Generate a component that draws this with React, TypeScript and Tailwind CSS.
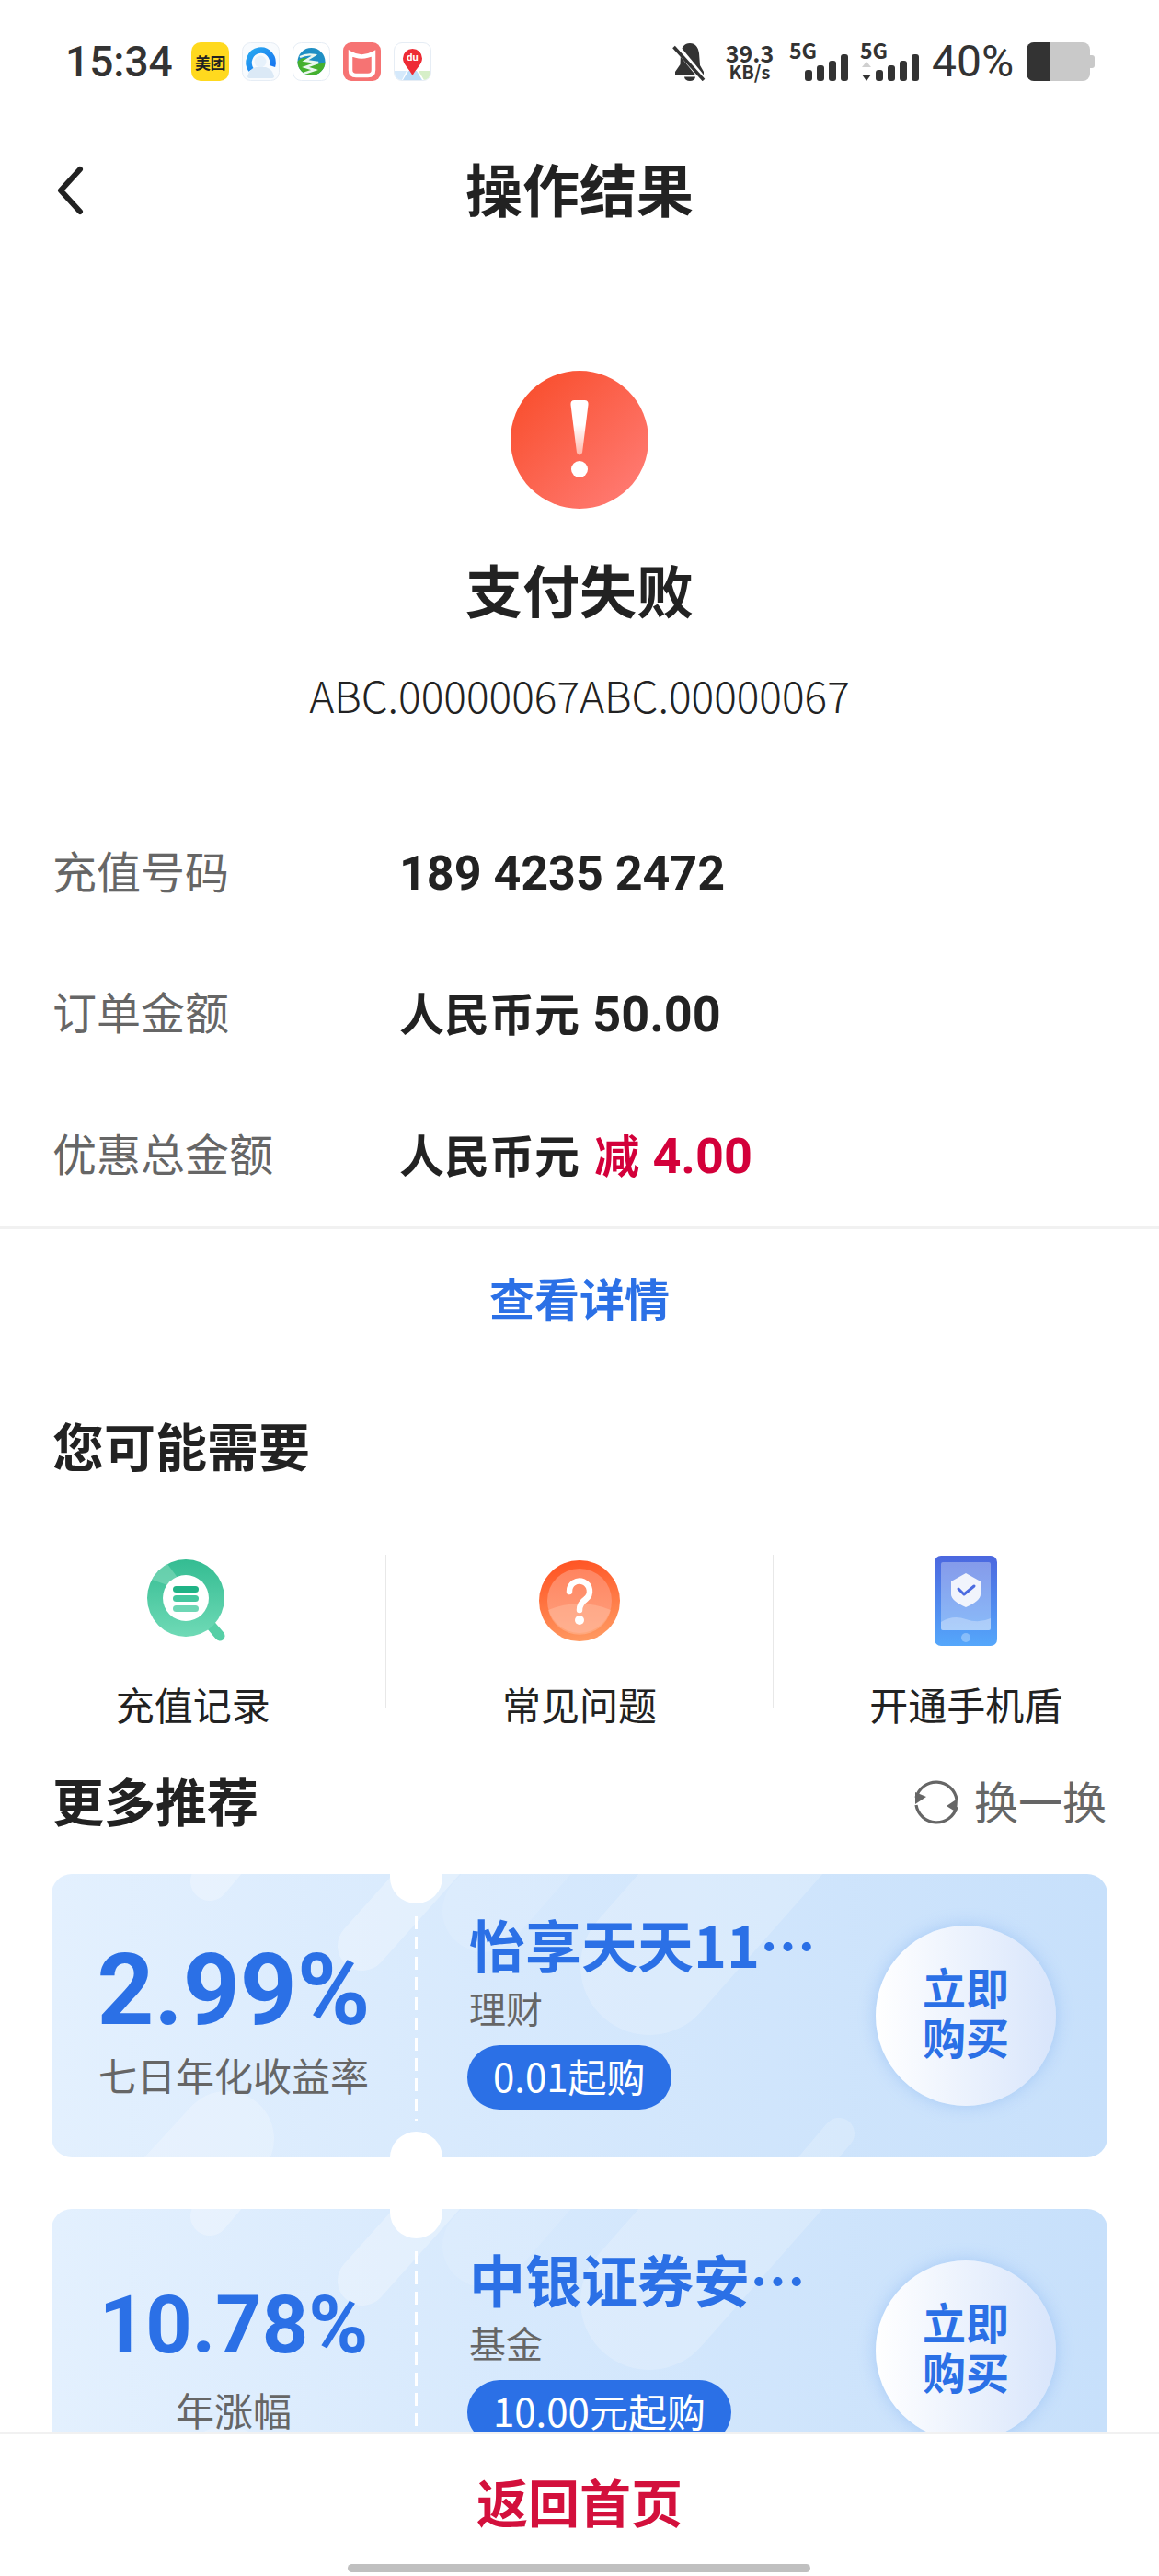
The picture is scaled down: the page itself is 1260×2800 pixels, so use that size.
import React from "react";

const SANS = "font-['Noto_Sans_CJK_SC','Noto_Sans',sans-serif]";
const NUM = "font-['Roboto','Noto_Sans_CJK_SC',sans-serif]";

function MeituanIcon() {
  return (
    <div className="flex h-[42px] w-[41px] items-center justify-center rounded-[10px] bg-[#ffd91e] text-[17px] font-bold leading-none tracking-[-0.5px] text-[#222]">
      美团
    </div>
  );
}

function BrowserIcon() {
  return (
    <svg width="41" height="42" viewBox="0 0 41 42">
      <defs>
        <linearGradient id="brg" x1="0" y1="0" x2="1" y2="1">
          <stop offset="0" stopColor="#28a8f0" />
          <stop offset="1" stopColor="#1874f0" />
        </linearGradient>
      </defs>
      <rect x="0.5" y="0.5" width="40" height="41" rx="9" fill="#f8fbfe" stroke="#e6edf5" />
      <path d="M10 30 A13 13.5 0 1 1 33 26" fill="none" stroke="url(#brg)" strokeWidth="6.5" />
      <circle cx="20" cy="21" r="6.5" fill="#e6f1fb" />
      <path d="M6 37 Q8 29 15 27 H26 Q33 29 35 37 Q35 39 32 39 H9 Q6 39 6 37Z" fill="#dbe9f6" />
    </svg>
  );
}

function LandscapeIcon() {
  return (
    <svg width="41" height="42" viewBox="0 0 41 42">
      <defs>
        <clipPath id="lc">
          <ellipse cx="20.5" cy="21" rx="15" ry="15" />
        </clipPath>
      </defs>
      <rect x="0.5" y="0.5" width="40" height="41" rx="9" fill="#fff" stroke="#e6edf5" />
      <g clipPath="url(#lc)">
        <rect x="0" y="0" width="41" height="42" fill="#1f8fc4" />
        <path d="M4 22 Q14 12 20 22 Q30 26 38 20 V40 H4Z" fill="#45b02e" />
        <path d="M8 16 Q16 12 24 14 L14 20 L28 22 L14 27 L24 30 L12 34" fill="none" stroke="#eaf7ee" strokeWidth="2.4" />
      </g>
    </svg>
  );
}

function CupIcon() {
  return (
    <svg width="41" height="42" viewBox="0 0 41 42">
      <rect width="41" height="42" rx="9" fill="#f67373" />
      <path d="M8 12 Q20 19 33 12 V30 Q33 36 27 36 H14 Q8 36 8 30 Z" fill="none" stroke="#fff" strokeWidth="4.5" />
    </svg>
  );
}

function MapIcon() {
  return (
    <div className="relative h-[42px] w-[41px] overflow-hidden rounded-[9px] border border-[#e6edf5] bg-white">
      <svg className="absolute inset-0" width="39" height="40" viewBox="0 0 39 40">
        <path d="M0 30 H13 L8 40 H0Z" fill="#d5e9fb" />
        <path d="M15 30 H24 L30 40 H9Z" fill="#bcdcf8" />
        <path d="M26 30 H39 V40 H32Z" fill="#d6efc8" />
        <path d="M19.5 6 a10.5 10.5 0 0 1 10.5 10.5 C30 23 23 28 19.5 35 C16 28 9 23 9 16.5 A10.5 10.5 0 0 1 19.5 6Z" fill="#ee2b35" />
      </svg>
      <span className="absolute left-0 right-0 top-[9px] text-center font-['Roboto',sans-serif] text-[11px] font-bold leading-[14px] text-white">du</span>
    </div>
  );
}

function BellOff() {
  return (
    <svg width="37" height="42" viewBox="0 0 37 42">
      <path d="M19 1 C13 1 10 5 9 12 L8.5 24 L3 32 L3 35 H34 V32 L30 25 L29 12 C28 5 25 1 19 1Z" fill="#333" />
      <path d="M13 37.5 H25 A6 4.5 0 0 1 13 37.5Z" fill="#333" />
      <path d="M2 2 L35 42" stroke="#fff" strokeWidth="7" />
      <path d="M1.5 5 L34 41" stroke="#333" strokeWidth="3.6" />
    </svg>
  );
}

function Signal({ arrows }: { arrows?: boolean }) {
  return (
    <svg width="63" height="29" viewBox="0 0 63 29">
      {arrows && (
        <>
          <path d="M1 14 L6 8 L11 14Z" fill="#d0d0d0" />
          <path d="M1 22 L6 29 L11 22Z" fill="#333" />
        </>
      )}
      <rect x="16" y="17" width="8" height="12" rx="3" fill="#333" />
      <rect x="29" y="12" width="8" height="17" rx="3" fill="#333" />
      <rect x="42" y="7" width="8" height="22" rx="3" fill="#333" />
      <rect x="55" y="0" width="8" height="29" rx="3" fill="#333" />
    </svg>
  );
}

function Battery() {
  return (
    <svg width="74" height="42" viewBox="0 0 74 42">
      <rect x="0" y="0" width="69" height="42" rx="8" fill="#c9c9c9" />
      <path d="M69 14 h2 a3 3 0 0 1 3 3 v8 a3 3 0 0 1 -3 3 h-2Z" fill="#c9c9c9" />
      <path d="M8 0 H26 V42 H8 A8 8 0 0 1 0 34 V8 A8 8 0 0 1 8 0Z" fill="#333" />
    </svg>
  );
}

function StatusBar() {
  return (
    <div className="flex h-[134px] items-start justify-between pl-[71px] pr-[70px] pt-[46px]">
      <div className="flex h-[42px] items-center">
        <span className={`${NUM} w-[137px] text-[46px] font-medium leading-[42px] text-[#333]`}>15:34</span>
        <div className="flex gap-[14px]">
          <MeituanIcon />
          <BrowserIcon />
          <LandscapeIcon />
          <CupIcon />
          <MapIcon />
        </div>
      </div>
      <div className="flex h-[42px] items-center">
        <BellOff />
        <div className={`${SANS} ml-[20px] flex w-[54px] flex-col items-center font-bold text-[#333]`}>
          <span className="h-[22px] text-[25px] leading-[22px]">39.3</span>
          <span className="h-[20px] text-[20px] leading-[20px]">KB/s</span>
        </div>
        <div className="relative ml-[16px] h-[42px] w-[64px]">
          <span className={`${SANS} absolute left-0 top-[-5px] text-[23px] font-bold leading-[26px] text-[#333]`}>5G</span>
          <div className="absolute bottom-0 right-0"><Signal /></div>
        </div>
        <div className="relative ml-[13px] h-[42px] w-[64px]">
          <span className={`${SANS} absolute left-0 top-[-5px] text-[23px] font-bold leading-[26px] text-[#333]`}>5G</span>
          <div className="absolute bottom-0 right-0"><Signal arrows /></div>
        </div>
        <span className={`${NUM} ml-[14px] w-[103px] text-[48px] leading-[42px] text-[#333]`}>40%</span>
        <Battery />
      </div>
    </div>
  );
}

function Header() {
  return (
    <div className="relative flex h-[146px] items-center justify-center">
      <svg className="absolute left-[60px] top-[46px]" width="32" height="54" viewBox="0 0 32 54">
        <path d="M27 4 L6 27 L27 50" fill="none" stroke="#222" strokeWidth="6" strokeLinecap="round" strokeLinejoin="round" />
      </svg>
      <h1 className="pb-[6px] text-[62px] font-bold leading-[80px] text-[#222]">操作结果</h1>
    </div>
  );
}

function AlertIcon() {
  return (
    <svg width="150" height="150" viewBox="0 0 150 150">
      <defs>
        <linearGradient id="alertBg" x1="0.1" y1="0.1" x2="0.9" y2="0.9">
          <stop offset="0" stopColor="#f94f2e" />
          <stop offset="1" stopColor="#ff7a72" />
        </linearGradient>
        <linearGradient id="alertMark" x1="0" y1="0" x2="0" y2="1">
          <stop offset="0" stopColor="#fff" />
          <stop offset="0.45" stopColor="#fff" />
          <stop offset="1" stopColor="#ffb5a8" />
        </linearGradient>
      </defs>
      <circle cx="75" cy="75" r="75" fill="url(#alertBg)" />
      <path d="M69.5 32 H80.5 Q85 32 84.5 37 L78 89 Q75 94 72 89 L65.5 37 Q65 32 69.5 32Z" fill="url(#alertMark)" />
      <circle cx="75" cy="107" r="9" fill="#fff" />
    </svg>
  );
}

function InfoRow({ label, children }: { label: string; children: React.ReactNode }) {
  return (
    <div className="flex h-[153.5px] items-center pl-[57px]">
      <span className="w-[377px] pb-[6px] text-[48px] leading-[60px] text-[#666]">{label}</span>
      <span className={`${NUM} pt-[6px] text-[49px] font-bold leading-[60px] text-[#222]`}>{children}</span>
    </div>
  );
}

function GreenIcon() {
  return (
    <svg className="mr-[14px]" width="86" height="90" viewBox="0 0 86 90">
      <defs>
        <linearGradient id="gr" x1="0" y1="0" x2="0" y2="1">
          <stop offset="0" stopColor="#34bc92" />
          <stop offset="1" stopColor="#6fdab6" />
        </linearGradient>
      </defs>
      <path d="M67 69 L79 83" stroke="#56cfa6" strokeWidth="11" strokeLinecap="round" />
      <circle cx="42" cy="42" r="42" fill="url(#gr)" />
      <path d="M5 22 A42 42 0 0 1 22 5 L45 36 Z" fill="#8adcc0" opacity="0.55" />
      <circle cx="42" cy="42" r="25" fill="#fff" />
      <rect x="28" y="29" width="28" height="7" rx="3.5" fill="#20b386" />
      <rect x="28" y="39" width="28" height="7" rx="3.5" fill="#45c79f" />
      <rect x="28" y="50" width="28" height="7" rx="3.5" fill="#6ed7b5" />
    </svg>
  );
}

function OrangeIcon() {
  return (
    <svg width="88" height="88" viewBox="0 0 88 88">
      <defs>
        <linearGradient id="orOuter" x1="0.4" y1="0" x2="0.6" y2="1">
          <stop offset="0" stopColor="#ff5424" />
          <stop offset="1" stopColor="#ff9a62" />
        </linearGradient>
        <linearGradient id="orInner" x1="0.5" y1="0" x2="0.5" y2="1">
          <stop offset="0" stopColor="#ff8460" />
          <stop offset="1" stopColor="#ffa27f" />
        </linearGradient>
      </defs>
      <circle cx="44" cy="44" r="44" fill="url(#orOuter)" />
      <circle cx="44" cy="44" r="35" fill="url(#orInner)" />
      <path d="M10 56 Q44 42 78 56 A35 35 0 0 1 10 56Z" fill="#ffc0a4" opacity="0.45" transform="translate(0 -2)" />
      <path d="M33 34 A11 11 0 1 1 51 42 Q44 47 44 54" fill="none" stroke="#fff" strokeWidth="6.5" strokeLinecap="round" />
      <circle cx="44" cy="65" r="5" fill="#fff" />
    </svg>
  );
}

function PhoneIcon() {
  return (
    <svg width="68" height="98" viewBox="0 0 68 98">
      <defs>
        <linearGradient id="ph" x1="0" y1="0" x2="0" y2="1">
          <stop offset="0" stopColor="#4b67df" />
          <stop offset="1" stopColor="#55a7fb" />
        </linearGradient>
      </defs>
      <rect width="68" height="98" rx="7" fill="url(#ph)" />
      <rect x="7" y="7" width="54" height="74" rx="2" fill="#fff" opacity="0.32" />
      <path d="M7 72 Q20 64 34 69 T61 68 V79 a2 2 0 0 1 -2 2 H9 a2 2 0 0 1 -2 -2Z" fill="#fff" opacity="0.3" />
      <path d="M34 19 L50 28 V42 Q50 49 34 56 Q18 49 18 42 V28Z" fill="#f1f4fc" />
      <path d="M26 36 L32 42 L43 33" fill="none" stroke="#4c6be0" strokeWidth="3" strokeLinecap="round" strokeLinejoin="round" />
      <ellipse cx="34" cy="89" rx="5" ry="5" fill="#fff" opacity="0.3" />
    </svg>
  );
}

function Service({ icon, label }: { icon: React.ReactNode; label: string }) {
  return (
    <div className="flex flex-1 flex-col items-center">
      <div className="flex h-[100px] items-center justify-center">{icon}</div>
      <span className="mt-[38px] text-[42px] leading-[48px] text-[#222]">{label}</span>
    </div>
  );
}

function RefreshIcon() {
  return (
    <svg className="mr-[2px]" width="50" height="50" viewBox="0 0 50 50">
      <path d="M3 20 A22.5 22.5 0 0 1 47 22" fill="none" stroke="#666" strokeWidth="3.2" />
      <path d="M47 30 A22.5 22.5 0 0 1 3 28" fill="none" stroke="#666" strokeWidth="3.2" />
      <path d="M2 14 L14 19 L2 27Z" fill="#666" />
      <path d="M48 21 L36 29 L47 36Z" fill="#666" />
    </svg>
  );
}

function CardDecor() {
  return (
    <svg className="absolute inset-0" width="1148" height="308" viewBox="0 0 1148 308">
      <g stroke="#fff" strokeLinecap="round" fill="none">
        <path d="M172 8 L230 -60" strokeWidth="42" opacity="0.28" />
        <path d="M338 78 L440 -36" strokeWidth="54" opacity="0.28" />
        <path d="M190 288 L50 440" strokeWidth="104" opacity="0.22" />
        <path d="M650 100 L800 -70" strokeWidth="150" opacity="0.2" />
        <path d="M470 40 L540 -40" strokeWidth="90" opacity="0.1" />
        <path d="M856 282 L790 360" strokeWidth="34" opacity="0.2" />
      </g>
    </svg>
  );
}

function ProductCard({
  rate,
  rateSize,
  rateLabel,
  title,
  kind,
  pill,
}: {
  rate: string;
  rateSize: string;
  rateLabel: string;
  title: string;
  kind: string;
  pill: string;
}) {
  return (
    <div className="relative flex h-[308px] overflow-hidden rounded-[22px] bg-gradient-to-r from-[#e3f0fe] to-[#c7e0fb]">
      <CardDecor />
      <div className="absolute left-[368px] top-[-36px] h-[68px] w-[57px] rounded-full bg-white" />
      <div className="absolute bottom-[-36px] left-[368px] h-[64px] w-[57px] rounded-full bg-white" />
      <div className="absolute left-[395px] top-[46px] h-[222px] w-[3px] bg-[repeating-linear-gradient(to_bottom,#fff_0,#fff_14px,transparent_14px,transparent_22px)]" />
      <div className="relative flex w-[396px] flex-col items-center pt-[76px]">
        <span className={`${NUM} ${rateSize} h-[100px] font-bold leading-[100px] text-[#2b70e6]`}>{rate}</span>
        <span className="mt-[17px] text-[42px] leading-[50px] text-[#666]">{rateLabel}</span>
      </div>
      <div className="relative flex flex-1 flex-col items-start pl-[56px] pt-[41px]">
        <span className="ml-[2px] whitespace-nowrap text-[61px] font-bold leading-[70px] text-[#2b70e6]">{title}</span>
        <span className="ml-[2px] mt-[9px] text-[40px] leading-[50px] text-[#666]">{kind}</span>
        <span className="mt-[16px] flex h-[70px] items-center rounded-full bg-[#2b70e6] px-[28px] pb-[5px] text-[42px] text-white">{pill}</span>
      </div>
      <div className="relative mr-[56px] flex h-[196px] w-[196px] flex-col items-center justify-center self-center rounded-full bg-gradient-to-r from-white to-[#d8e5fb] pb-[9px] text-[47px] font-bold leading-[54px] text-[#2b70e6] shadow-[0_0_18px_rgba(110,165,240,0.4)]">
        <span>立即</span>
        <span>购买</span>
      </div>
    </div>
  );
}

export default function App() {
  return (
    <div className={`${SANS} flex h-[2800px] w-[1260px] flex-col overflow-hidden bg-white`}>
      <main className="min-h-0 flex-1 overflow-hidden">
        <StatusBar />
        <Header />
        <section className="flex flex-col items-center pt-[123px]">
          <AlertIcon />
          <h2 className="mt-[47px] text-[62px] font-bold leading-[80px] text-[#222]">支付失败</h2>
          <p className="mt-[45px] text-[46px] font-light leading-[60px] text-[#222]">ABC.00000067ABC.00000067</p>
        </section>
        <section className="mt-[86px] border-b-[3px] border-[#f1f1f1] pb-[1px]">
          <InfoRow label="充值号码">
            <span className="text-[52px]">189 4235 2472</span>
          </InfoRow>
          <InfoRow label="订单金额">
            人民币元 <span className="ml-[2px] text-[54px]">50.00</span>
          </InfoRow>
          <InfoRow label="优惠总金额">
            人民币元 <span className="ml-[4px] text-[#d3003a]">减 <span className="ml-[2px] text-[54px]">4.00</span></span>
          </InfoRow>
        </section>
        <div className="flex h-[154px] items-center justify-center pb-[6px] text-[49px] font-bold text-[#2b70e6]">查看详情</div>
        <h3 className="mt-[40px] pl-[57px] text-[56px] font-bold leading-[80px] text-[#222]">您可能需要</h3>
        <section className="mt-[80px] flex items-start">
          <Service icon={<GreenIcon />} label="充值记录" />
          <div className="h-[167px] w-px bg-[#e8e8e8]" />
          <Service icon={<OrangeIcon />} label="常见问题" />
          <div className="h-[167px] w-px bg-[#e8e8e8]" />
          <Service icon={<PhoneIcon />} label="开通手机盾" />
        </section>
        <div className="mt-[43px] flex h-[80px] items-center justify-between px-[57px]">
          <h3 className="pb-[6px] text-[56px] font-bold leading-[80px] text-[#222]">更多推荐</h3>
          <div className="flex items-center gap-[14px] text-[48px] leading-[60px] text-[#666]">
            <RefreshIcon />
            <span className="pb-[6px]">换一换</span>
          </div>
        </div>
        <div className="mt-[38px] flex flex-col gap-[56px] pl-[56px] pr-[56px]">
          <ProductCard rate="2.99%" rateSize="text-[108px]" rateLabel="七日年化收益率" title="怡享天天11⋯" kind="理财" pill="0.01起购" />
          <ProductCard rate="10.78%" rateSize="text-[88px]" rateLabel="年涨幅" title="中银证券安⋯" kind="基金" pill="10.00元起购" />
        </div>
      </main>
      <footer className="relative flex h-[157px] shrink-0 justify-center border-t-[3px] border-[#f1f1f1] bg-white pt-[32px]">
        <span className="text-[56px] font-bold leading-[80px] text-[#d3103c]">返回首页</span>
        <div className="absolute bottom-[4px] left-[378px] h-[9px] w-[503px] rounded-full bg-[#c0c0c0]" />
      </footer>
    </div>
  );
}
